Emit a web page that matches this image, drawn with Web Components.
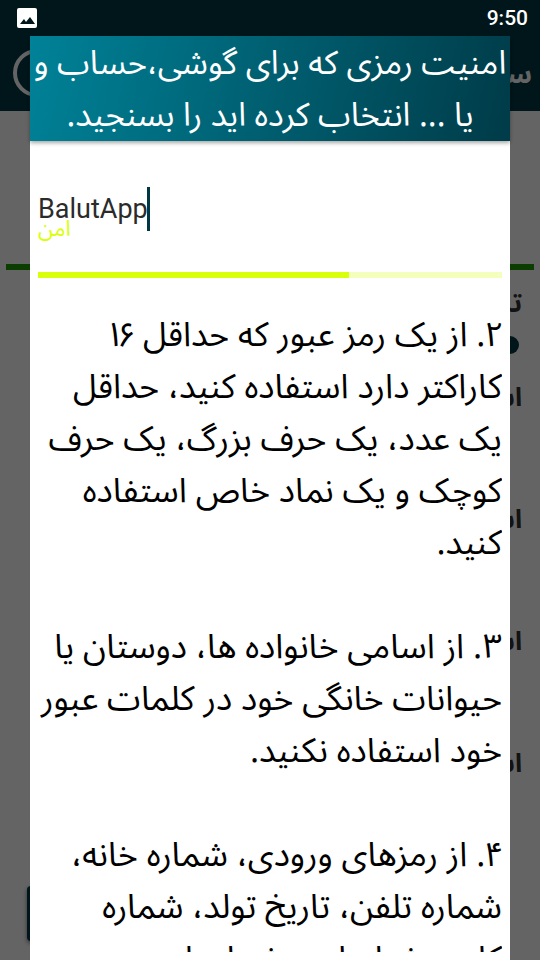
<!DOCTYPE html>
<html lang="fa" dir="rtl">
<head>
<meta charset="utf-8">
<meta name="viewport" content="width=device-width, initial-scale=1">
<title>امنیت رمز</title>
<style>
    html, body { height: 100%; margin: 0; overflow: hidden; }
    body {
        font-family: "Noto Sans Arabic UI", "DejaVu Sans", sans-serif;
        background: #fafafa;
    }
</style>
</head>
<body>
<password-app></password-app>

<script>
class StatusBar extends HTMLElement {
    constructor() {
        super();
        this.attachShadow({ mode: 'open' });
    }

    connectedCallback() {
        this.shadowRoot.innerHTML = `
            <style>
                :host {
                    position: relative;
                    z-index: 20;
                    display: flex;
                    direction: ltr;
                    align-items: center;
                    justify-content: space-between;
                    height: 36px;
                    padding: 0 12px 0 16px;
                    box-sizing: border-box;
                    background: #00161b;
                    color: #fff;
                    font: 500 21px/36px Roboto, sans-serif;
                }
                svg { display: block; }
            </style>
            <svg width="22" height="22" viewBox="0 0 22 22" aria-hidden="true">
                <rect x="1" y="1" width="20" height="20" rx="2" fill="#fff"/>
                <path d="M4 17l4-5 2 3 4-5 5 7z" fill="#00161b"/>
            </svg>
            <span>9:50</span>
        `;
    }
}

class AppBar extends HTMLElement {
    constructor() {
        super();
        this.attachShadow({ mode: 'open' });
    }

    connectedCallback() {
        this.shadowRoot.innerHTML = `
            <style>
                :host {
                    display: flex;
                    align-items: center;
                    justify-content: space-between;
                    height: 75px;
                    padding: 0 8px 2px 12px;
                    box-sizing: border-box;
                    background: #003743;
                    color: #fafafa;
                }
                h1 { margin: 0; font-size: 26px; font-weight: 700; }
                svg { display: block; }
            </style>
            <h1><slot></slot></h1>
            <svg width="50" height="50" viewBox="0 0 50 50" aria-hidden="true">
                <circle cx="25" cy="25" r="22" fill="none" stroke="#fafafa" stroke-width="4"/>
            </svg>
        `;
    }
}

// Screen that stays behind the dialog
class PasswordPage extends HTMLElement {
    constructor() {
        super();
        this.attachShadow({ mode: 'open' });
    }

    connectedCallback() {
        this.shadowRoot.innerHTML = `
            <style>
                :host {
                    flex: 1;
                    display: flex;
                    flex-direction: column;
                    padding: 153px 6px 19px;
                    box-sizing: border-box;
                    color: #303030;
                    font-size: 26px;
                    font-weight: 700;
                }
                .bar { flex: none; height: 6px; background: #1d9a00; }
                .settings {
                    display: flex;
                    flex-direction: column;
                    padding: 14px 12px 0;
                }
                .row { height: 122px; line-height: 36px; }
                .row.first { height: 94px; }
                .knob {
                    width: 18px;
                    height: 18px;
                    margin: 16px 3px;
                    border-radius: 50%;
                    background: #003743;
                }
                .generate {
                    margin: auto 32px 0 21px;
                    height: 55px;
                    flex: none;
                    border: 0;
                    border-radius: 4px;
                    background: #003743;
                    box-shadow: 0 2px 4px rgba(0, 0, 0, .5);
                }
            </style>
            <div class="bar"></div>
            <div class="settings">
                <div class="row first">تن<div class="knob"></div></div>
                <div class="row">اس</div>
                <div class="row">اس</div>
                <div class="row">اس</div>
                <div class="row">اس</div>
            </div>
            <button class="generate" aria-label="ساخت رمز"></button>
        `;
    }
}

class StrengthInput extends HTMLElement {
    constructor() {
        super();
        this.attachShadow({ mode: 'open' });
    }

    connectedCallback() {
        this.shadowRoot.innerHTML = `
            <style>
                :host {
                    display: flex;
                    flex-direction: column;
                    direction: ltr;
                    padding-top: 38px;
                }
                .field { display: flex; align-items: center; height: 44px; }
                input {
                    field-sizing: content;
                    border: 0;
                    padding: 0;
                    outline: none;
                    background: none;
                    color: #2b2b2b;
                    font: 27px/44px Roboto, sans-serif;
                }
                .caret { width: 3px; height: 44px; margin-left: -1px; background: #003743; }
                label {
                    margin-top: -16px;
                    color: #d9ff0a;
                    font-size: 22px;
                    line-height: 24px;
                }
                .track { height: 6px; margin-top: 33px; background: #f4ffbe; }
                .value { width: 67%; height: 100%; background: #d9ff0a; }
            </style>
            <div class="field">
                <input id="password" type="text" value="${this.getAttribute('value')}">
                <span class="caret"></span>
            </div>
            <label for="password"><slot></slot></label>
            <div class="track"><div class="value"></div></div>
        `;
    }
}

class TipsDialog extends HTMLElement {
    constructor() {
        super();
        this.attachShadow({ mode: 'open' });
    }

    connectedCallback() {
        this.shadowRoot.innerHTML = `
            <style>
                :host {
                    position: fixed;
                    inset: 0;
                    z-index: 10;
                    display: flex;
                    padding: 36px 30px 0;
                    background: rgba(0, 0, 0, .6);
                }
                .dialog {
                    flex: 1;
                    min-width: 0;
                    display: flex;
                    flex-direction: column;
                    background: #fff;
                }
                header {
                    flex: none;
                    padding-bottom: 1px;
                    background: linear-gradient(102deg, #008298, #003b48);
                    box-shadow: 0 2px 4px rgba(0, 0, 0, .35);
                    color: #fff;
                    text-align: center;
                }
                h2 {
                    margin: 0;
                    font-size: 33px;
                    font-weight: 400;
                    line-height: 52px;
                    white-space: nowrap;
                }
                .content {
                    flex: 1;
                    min-height: 0;
                    margin: 8px;
                    overflow: hidden;
                }
            </style>
            <div class="dialog" role="dialog">
                <header><h2><slot name="title"></slot></h2></header>
                <div class="content"><slot></slot></div>
            </div>
        `;
    }
}

class TipList extends HTMLElement {
    constructor() {
        super();
        this.attachShadow({ mode: 'open' });
    }

    connectedCallback() {
        this.shadowRoot.innerHTML = `
            <style>
                :host {
                    display: block;
                    margin-top: 29px;
                    color: #000;
                    font-size: 34px;
                    line-height: 52px;
                }
                ::slotted(p) { white-space: nowrap; }
            </style>
            <slot></slot>
        `;
    }
}

class PasswordApp extends HTMLElement {
    constructor() {
        super();
        this.attachShadow({ mode: 'open' });
    }

    connectedCallback() {
        this.shadowRoot.innerHTML = `
            <style>
                :host {
                    display: flex;
                    flex-direction: column;
                    height: 100%;
                }
                tip-list p { margin: 0 0 52px; }
            </style>
            <status-bar></status-bar>
            <app-bar>سا</app-bar>
            <password-page></password-page>
            <tips-dialog>
                <span slot="title">امنیت رمزی که برای گوشی،حساب و<br>یا ... انتخاب کرده اید را بسنجید.</span>
                <strength-input value="BalutApp">امن</strength-input>
                <tip-list>
                    <p>۲. از یک رمز عبور که حداقل ۱۶<br>کاراکتر دارد استفاده کنید، حداقل<br>یک عدد، یک حرف بزرگ، یک حرف<br>کوچک و یک نماد خاص استفاده<br>کنید.</p>
                    <p>۳. از اسامی خانواده ها، دوستان یا<br>حیوانات خانگی خود در کلمات عبور<br>خود استفاده نکنید.</p>
                    <p>۴. از رمزهای ورودی، شماره خانه،<br>شماره تلفن، تاریخ تولد، شماره<br>کارت شناسایی، شماره امنیتی</p>
                </tip-list>
            </tips-dialog>
        `;
    }
}

customElements.define('status-bar', StatusBar);
customElements.define('app-bar', AppBar);
customElements.define('password-page', PasswordPage);
customElements.define('strength-input', StrengthInput);
customElements.define('tips-dialog', TipsDialog);
customElements.define('tip-list', TipList);
customElements.define('password-app', PasswordApp);
</script>
</body>
</html>
